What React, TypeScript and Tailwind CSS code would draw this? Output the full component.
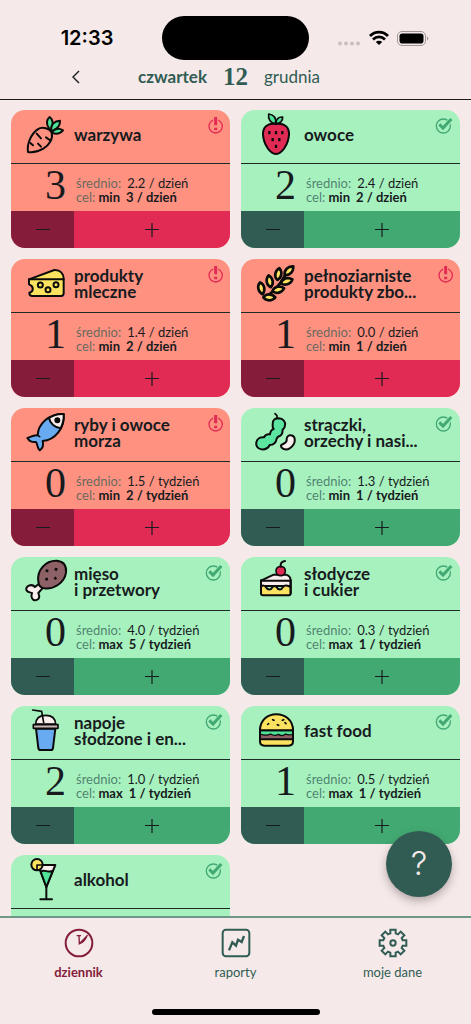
import type { ReactNode } from "react";

type Product = {
  title: string;
  count: number;
  average: string;
  limit: string;
  goal: string;
  ok: boolean;
  icon: ReactNode;
};

function Drawing({ box, children }: { box: string; children: ReactNode }) {
  return (
    <svg
      viewBox={box}
      className="size-12"
      fill="none"
      stroke="#0b0b0b"
      strokeWidth="6"
      strokeLinecap="round"
      strokeLinejoin="round"
      aria-hidden="true"
    >
      {children}
    </svg>
  );
}

const carrot = (
  <Drawing box="63 24 144 144">
    <g fill="#4fe39a" strokeWidth="6">
      <path d="M147 76C138 64 139 50 149 42C158 50 160 60 156 72" />
      <path d="M153 80C153 64 164 54 180 53C181 68 172 78 157 83" />
      <path d="M157 86C166 76 178 75 189 82C180 92 168 94 158 90" />
    </g>
    <path
      fill="#ff9180"
      d="M84 147C80 122 94 92 113 79C127 70 150 76 155 90C160 106 148 126 130 137C115 146 98 149 84 147Z"
    />
    <path d="M110 92L123 106M138 103L149 111M114 122L123 131M91 120L99 127" strokeWidth="6" />
  </Drawing>
);

const strawberry = (
  <Drawing box="45 24 144 144">
    <path
      fill="#e22b54"
      d="M120 63C95 60 80 72 81 95C83 125 102 152 120 153C138 152 157 125 159 95C160 72 145 60 120 63Z"
    />
    <g fill="#4fe39a" strokeWidth="5">
      <path d="M119 62C102 60 96 47 98 33C112 34 122 45 119 62Z" />
      <path d="M119 62C121 48 129 41 140 42C141 55 132 62 119 62Z" />
    </g>
    <path
      strokeWidth="7"
      strokeLinecap="butt"
      d="M100 84V94M120 84V94M139 84V94M110 105V115M130 105V115M120 125V135"
    />
  </Drawing>
);

const cheese = (
  <Drawing box="63 21 144 144">
    <path
      fill="#fbe35f"
      d="M87 79L163 51C181 50 191 62 191 78V121Q191 129 183 129H97Q88 129 88 119C102 116 102 99 87 94Z"
    />
    <path d="M87 79H191" />
    <g strokeWidth="6">
      <circle cx="121" cy="96" r="7.500" />
      <circle cx="168" cy="95" r="7.500" />
      <circle cx="144" cy="110" r="7.500" />
    </g>
  </Drawing>
);

const grain = "M-18 0C-10 -12 8 -12 18 0C8 12 -10 12 -18 0Z";

const wheat = (
  <Drawing box="45 21 144 144">
    <path d="M84 134C112 120 132 95 148 66" strokeWidth="8" />
    <g fill="#fbe35f" strokeWidth="8">
      <path d={grain} transform="translate(159 53) rotate(-45)" />
      <path d={grain} transform="translate(127 63) rotate(-80)" />
      <path d={grain} transform="translate(152 85) rotate(-18)" />
      <path d={grain} transform="translate(101 85) rotate(-100)" />
      <path d={grain} transform="translate(127 110) rotate(-14)" />
      <path d={grain} transform="translate(76 106) rotate(78)" />
      <path d={grain} transform="translate(100 133) rotate(0)" />
    </g>
  </Drawing>
);

const fish = (
  <Drawing box="63 18 144 144">
    <path
      fill="#69abf0"
      d="M113 97C114 64 146 31 191 33C195 74 165 112 128 114C131 125 128 136 119 142C112 136 113 124 108 117C100 118 88 115 82 105C92 102 100 95 113 97Z"
    />
    <path fill="#f9eeec" d="M147 45C160 36 175 32 191 33C192 49 189 62 182 76C165 74 150 62 147 45Z" />
    <circle cx="172" cy="52" r="6" fill="#0b0b0b" />
    <path d="M113 97L119 101" strokeWidth="5" />
  </Drawing>
);

const beans = (
  <Drawing box="45 18 144 144">
    <path d="M117 32L123 38V47" strokeWidth="5" />
    <path
      fill="#5ce5a0"
      d="M110 64C109 50 118 46 128 46C142 47 149 56 147 67C147 73 144 77 140 80C140 92 136 99 126 101C124 104 124 105 122 107C120 120 112 126 101 126C96 137 86 140 76 139C64 137 59 127 61 118C63 107 73 102 84 103C88 94 95 93 102 94C103 85 107 80 113 78C110 73 109 69 110 64Z"
    />
    <path
      fill="#f9eeec"
      d="M164 97C181 99 181 123 161 136C149 143 134 137 135 127C137 122 151 123 152 112C151 104 155 96 164 97Z"
    />
  </Drawing>
);

const meat = (
  <Drawing box="63 21 144 144">
    <path
      fill="#f9eeec"
      d="M117 98L105 108C96 97 77 104 79 117C82 124 90 124 96 126C92 137 96 149 107 148C118 147 120 137 115 126L127 112"
    />
    <path
      fill="#8d6166"
      d="M115 92C110 58 136 28 170 29C190 31 200 44 198 65C193 97 160 116 132 112C124 111 116 104 115 92Z"
    />
    <path
      strokeWidth="8"
      strokeLinecap="butt"
      d="M137 59L145 60M164 54L172 56M136 85L144 84M163 84L169 80"
    />
  </Drawing>
);

const cake = (
  <Drawing box="45 21 144 144">
    <path fill="#f9eeec" d="M75 89L113 71H150C160 74 164 81 164 89V105H75Z" />
    <path
      fill="#fbe35f"
      d="M75 107C80 103 86 102 90 109C95 118 105 118 109 109C113 104 118 104 122 109C127 118 136 118 140 109C145 102 155 102 164 109V127Q164 133 158 133H81Q75 133 75 127Z"
    />
    <path d="M75 88V127M164 88V127M75 89H164" />
    <circle cx="134" cy="60" r="14" fill="#e22b54" strokeWidth="5" />
    <path d="M134 47C133 38 138 31 147 30" />
  </Drawing>
);

const cup = (
  <Drawing box="63 23 144 144">
    <path fill="#f9eeec" d="M107 74C108 57 120 48 137 48C155 48 166 58 167 74Z" strokeWidth="5" />
    <path d="M98 32L125 36L131 70" strokeWidth="5" />
    <path fill="#69abf0" d="M108 88L115 146Q116 152 122 152H153Q158 152 159 146L166 88Z" />
    <path fill="#cbb9b7" d="M100 76H174V87H100Z" strokeWidth="5" />
  </Drawing>
);

const burger = (
  <Drawing box="45 23 144 144">
    <path fill="#8d6166" d="M72 102H171V122H72Z" />
    <path
      fill="#4fe39a"
      strokeWidth="4"
      d="M72 94H171V104C162 108 156 108 149 104C142 110 134 110 127 105C118 110 110 108 104 104C96 108 82 108 72 104Z"
    />
    <path fill="#fbe35f" d="M72 93C72 63 94 45 121 45C148 45 171 63 171 93Z" />
    <path fill="#fbe35f" d="M72 120H171V126Q171 139 158 139H85Q72 139 72 126Z" />
    <path d="M72 90V126M171 90V126" />
    <path d="M110 61L114 63M139 63L143 61M95 75L98 73M124 76L128 78M147 70L150 73" strokeWidth="5" />
  </Drawing>
);

const cocktail = (
  <Drawing box="63 468 144 144">
    <path fill="#f9eeec" d="M114 495H166L139 561Z" />
    <path fill="#4fe39a" d="M122 515C133 506 144 520 158 513L139 561Z" />
    <path d="M139 561V598M121 598H156" />
    <circle cx="111" cy="494" r="17" fill="#fbe35f" />
    <path d="M128 495H111V511" strokeWidth="5" />
  </Drawing>
);

const products: Product[] = [
  { title: "warzywa", count: 3, average: "2.2 / dzień", limit: "min", goal: "3 / dzień", ok: false, icon: carrot },
  { title: "owoce", count: 2, average: "2.4 / dzień", limit: "min", goal: "2 / dzień", ok: true, icon: strawberry },
  { title: "produkty\nmleczne", count: 1, average: "1.4 / dzień", limit: "min", goal: "2 / dzień", ok: false, icon: cheese },
  { title: "pełnoziarniste\nprodukty zbo...", count: 1, average: "0.0 / dzień", limit: "min", goal: "1 / dzień", ok: false, icon: wheat },
  { title: "ryby i owoce\nmorza", count: 0, average: "1.5 / tydzień", limit: "min", goal: "2 / tydzień", ok: false, icon: fish },
  { title: "strączki,\norzechy i nasi...", count: 0, average: "1.3 / tydzień", limit: "min", goal: "1 / tydzień", ok: true, icon: beans },
  { title: "mięso\ni przetwory", count: 0, average: "4.0 / tydzień", limit: "max", goal: "5 / tydzień", ok: true, icon: meat },
  { title: "słodycze\ni cukier", count: 0, average: "0.3 / tydzień", limit: "max", goal: "1 / tydzień", ok: true, icon: cake },
  { title: "napoje\nsłodzone i en...", count: 2, average: "1.0 / tydzień", limit: "max", goal: "1 / tydzień", ok: true, icon: cup },
  { title: "fast food", count: 1, average: "0.5 / tydzień", limit: "max", goal: "1 / tydzień", ok: true, icon: burger },
  { title: "alkohol", count: 0, average: "0.0 / tydzień", limit: "max", goal: "1 / tydzień", ok: true, icon: cocktail },
];

function StatusMark({ ok }: { ok: boolean }) {
  return (
    <svg viewBox="0 0 60 60" className="absolute top-1.5 right-1.5 size-5" fill="none" aria-hidden="true">
      {ok ? (
        <>
          <circle cx="28" cy="30" r="21" stroke="#42a972" strokeWidth="4" />
          <path d="M17 26L27 37L52 10" stroke="#a7f1bf" strokeWidth="14" />
          <path d="M16 25L27 36L52 9" stroke="#42a972" strokeWidth="9" />
        </>
      ) : (
        <>
          <circle cx="35" cy="31" r="20" stroke="#e22b54" strokeWidth="4" />
          <path d="M35 2V30" stroke="#ff9180" strokeWidth="15" />
          <path d="M35 3V28M35 35V43" stroke="#e22b54" strokeWidth="9" />
        </>
      )}
    </svg>
  );
}

function ProductCard({ product }: { product: Product }) {
  const { ok } = product;
  return (
    <article
      className={`relative flex flex-col overflow-hidden rounded-[14px] text-[#171b1e] ${ok ? "bg-[#a7f1bf]" : "bg-[#ff9180]"}`}
    >
      <div className="flex h-[54px] items-center border-b border-[#1c2b26] pb-[3px]">
        <div className="flex w-[63px] shrink-0 justify-center pl-1">{product.icon}</div>
        <h2 className="text-[17px] leading-4 font-bold whitespace-pre-line">{product.title}</h2>
      </div>
      <StatusMark ok={ok} />
      <div className="flex h-[47px] items-center">
        <div className="w-[63px] shrink-0 pr-2 pb-1.5 text-right font-['Liberation_Serif',serif] text-[42px] leading-10">
          {product.count}
        </div>
        <div className="pt-1 pl-0.5 text-[13px] leading-[14px]">
          <p className="flex gap-1.5">
            <span className="text-[#315c54]/75">średnio:</span>
            <span>{product.average}</span>
          </p>
          <p className="flex gap-1.5 font-bold">
            <span>
              <span className="font-normal text-[#315c54]/75">cel:</span> {product.limit}
            </span>
            <span>{product.goal}</span>
          </p>
        </div>
      </div>
      <div className="flex h-[37px]">
        <button
          type="button"
          aria-label="Odejmij"
          className={`flex w-[63px] items-center justify-center ${ok ? "bg-[#315c54]" : "bg-[#841c3a]"}`}
        >
          <svg viewBox="0 0 14 14" className="size-3.5" stroke="#171b1e" strokeWidth="1.200" aria-hidden="true">
            <path d="M0 6.500H14" />
          </svg>
        </button>
        <button
          type="button"
          aria-label="Dodaj"
          className={`flex flex-1 items-center justify-center ${ok ? "bg-[#42a972]" : "bg-[#e22b54]"}`}
        >
          <svg viewBox="0 0 14 14" className="size-3.5" stroke="#171b1e" strokeWidth="1.200" aria-hidden="true">
            <path d="M0 6.500H14M7 0V14" />
          </svg>
        </button>
      </div>
    </article>
  );
}

function StatusBar() {
  return (
    <div className="grid grid-cols-[1fr_147px_1fr] items-center pt-4">
      <div className="pl-3 text-center font-['Inter',sans-serif] text-xl font-semibold text-black">12:33</div>
      <div className="h-11 rounded-full bg-black" />
      <svg viewBox="0 0 93 20" className="mr-10 h-5 w-[93px] justify-self-end" fill="none" aria-hidden="true">
        <g fill="#c9c0bf">
          <circle cx="2" cy="15.500" r="2" />
          <circle cx="8" cy="15.500" r="2" />
          <circle cx="14" cy="15.500" r="2" />
          <circle cx="20" cy="15.500" r="2" />
        </g>
        <g stroke="#000" strokeWidth="2.800">
          <path d="M32 8C37 2.800 45 2.800 50 8" />
          <path d="M35 11.500C38.500 8.100 43.500 8.100 47 11.500" />
        </g>
        <path d="M41 17L37.800 13.900C39.500 12.300 42.500 12.300 44.200 13.900Z" fill="#000" />
        <rect x="59.500" y="3.500" width="28" height="14" rx="4.500" stroke="#a09897" />
        <rect x="61.500" y="5.500" width="24" height="10" rx="2.800" fill="#000" />
        <path d="M89 8.500V12.500C90.800 11.800 90.800 9.200 89 8.500Z" fill="#a09897" />
      </svg>
    </div>
  );
}

export default function App() {
  return (
    <div className="flex h-screen flex-col bg-[#f5eae9] font-['Lato',sans-serif]">
      <header className="shrink-0 border-b border-[#1a1a1a]">
        <StatusBar />
        <div className="grid h-[39px] grid-cols-[1fr_auto_1fr] items-center gap-4 pb-1.5 text-[17px] text-[#315c54]">
          <div className="flex items-center justify-between pl-[71px]">
            <button type="button" aria-label="Poprzedni dzień">
              <svg viewBox="0 0 10 14" className="h-3.5 w-2.5" fill="none" stroke="#171b1e" strokeWidth="1.400" aria-hidden="true">
                <path d="M8 1L2 7L8 13" />
              </svg>
            </button>
            <span className="font-bold">czwartek</span>
          </div>
          <span className="font-['Liberation_Serif',serif] text-[25px] leading-8 font-bold">12</span>
          <span>grudnia</span>
        </div>
      </header>

      <div className="relative min-h-0 flex-1">
        <main className="h-full overflow-y-auto [scrollbar-width:none]">
          <div className="grid grid-cols-2 gap-[11px] p-[11px] pt-2.5">
            {products.map((product) => (
              <ProductCard key={product.title} product={product} />
            ))}
          </div>
        </main>
        <button
          type="button"
          aria-label="Pomoc"
          className="absolute right-[19px] bottom-[19px] flex size-[66px] items-center justify-center rounded-full bg-[#315c54] font-['Inter',sans-serif] text-[33px] font-light text-[#f5eae9] shadow-[0_4px_8px_rgba(60,40,50,0.35)]"
        >
          ?
        </button>
      </div>

      <footer className="flex h-[108px] shrink-0 flex-col items-center justify-between border-t-2 border-[#6f9788] pt-2.5 pb-[9px]">
        <nav className="grid w-full grid-cols-3 text-[13px] leading-4 text-[#315c54]">
          <a href="#dziennik" className="flex flex-col items-center gap-1.5 font-bold text-[#841c3a]">
            <svg viewBox="0 0 90 90" className="size-[30px]" fill="none" stroke="currentColor" strokeWidth="6" aria-hidden="true">
              <circle cx="45" cy="45" r="40" />
              <path d="M38 23H51M45 23L46 47L71 22M46 47C55 45 63 36 68 26" strokeWidth="4" />
            </svg>
            dziennik
          </a>
          <a href="#raporty" className="flex flex-col items-center gap-1.5">
            <svg viewBox="0 0 90 90" className="size-[30px]" fill="none" stroke="currentColor" strokeWidth="6" aria-hidden="true">
              <rect x="5" y="5" width="80" height="80" rx="10" />
              <path d="M24 67L34 43L45 53L51 35L62 42L69 24" strokeWidth="7" />
            </svg>
            raporty
          </a>
          <a href="#moje-dane" className="flex flex-col items-center gap-1.5">
            <svg viewBox="0 0 90 90" className="size-[30px]" fill="none" stroke="currentColor" strokeWidth="6" aria-hidden="true">
              <path d="M37 5H53V16L60 19L68 11L79 22L71 30L74 37H85V53H74L71 60L79 68L68 79L60 71L53 74V85H37V74L30 71L22 79L11 68L19 60L16 53H5V37H16L19 30L11 22L22 11L30 19L37 16Z" />
              <circle cx="45" cy="45" r="8" />
            </svg>
            moje dane
          </a>
        </nav>
        <div className="h-1.5 w-[168px] rounded-full bg-black" />
      </footer>
    </div>
  );
}
